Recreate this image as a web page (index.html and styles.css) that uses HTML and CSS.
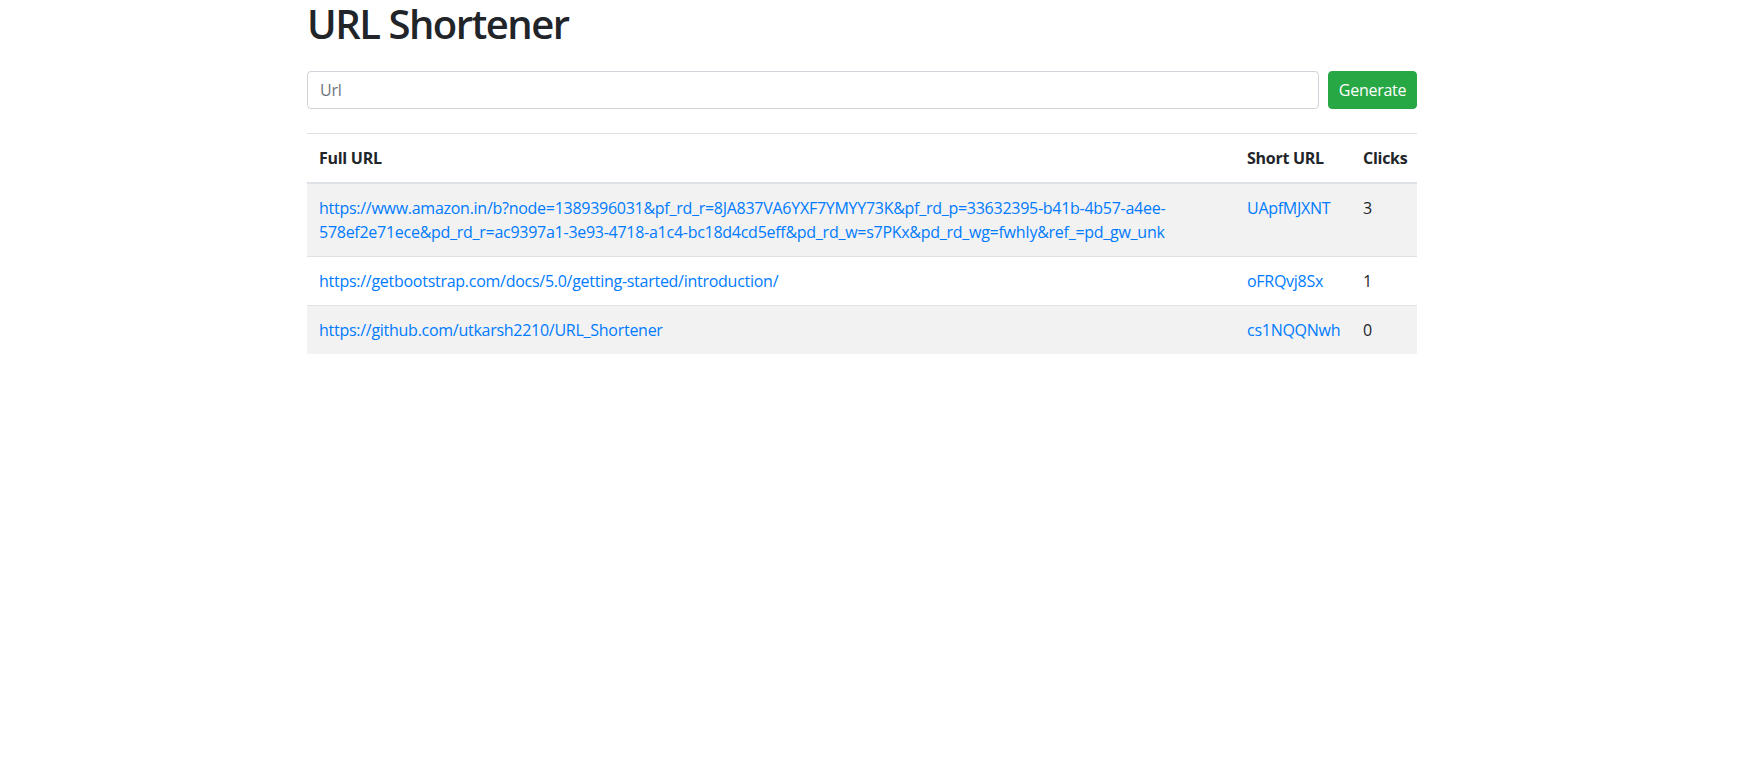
FILE: index.html
```html
<!DOCTYPE html>
<html lang="en">
<head>
<meta charset="utf-8">
<title>URL Shortener</title>
<link rel="stylesheet" href="styles.css">
</head>
<body>
<div class="page">
  <h1 class="title">URL Shortener</h1>
  <form class="shorten-form">
    <input class="url-input" type="text" placeholder="Url">
    <button class="btn-generate" type="button">Generate</button>
  </form>
  <table class="url-table">
    <colgroup>
      <col class="col-full">
      <col class="col-short">
      <col class="col-clicks">
    </colgroup>
    <thead>
      <tr><th>Full URL</th><th>Short URL</th><th>Clicks</th></tr>
    </thead>
    <tbody>
      <tr>
        <td><a href="#">https://www.amazon.in/b?node=1389396031&amp;pf_rd_r=8JA837VA6YXF7YMYY73K&amp;pf_rd_p=33632395-b41b-4b57-a4ee-578ef2e71ece&amp;pd_rd_r=ac9397a1-3e93-4718-a1c4-bc18d4cd5eff&amp;pd_rd_w=s7PKx&amp;pd_rd_wg=fwhIy&amp;ref_=pd_gw_unk</a></td>
        <td><a href="#">UApfMJXNT</a></td>
        <td>3</td>
      </tr>
      <tr>
        <td><a href="#">https://getbootstrap.com/docs/5.0/getting-started/introduction/</a></td>
        <td><a href="#">oFRQvj8Sx</a></td>
        <td>1</td>
      </tr>
      <tr>
        <td><a href="#">https://github.com/utkarsh2210/URL_Shortener</a></td>
        <td><a href="#">cs1NQQNwh</a></td>
        <td>0</td>
      </tr>
    </tbody>
  </table>
</div>
</body>
</html>
```

FILE: styles.css
```css
* { box-sizing: border-box; }

body {
  margin: 0;
  padding-right: 18px;
  font-family: "Open Sans", "Noto Sans", sans-serif;
  font-size: 16px;
  line-height: 1.5;
  letter-spacing: -0.27px;
  color: #212529;
  background: #fff;
}

.page {
  max-width: 1110px;
  margin: 0 auto;
}

.title {
  margin: 0 0 23px;
  font-size: 40px;
  font-weight: 600;
  line-height: 48px;
  letter-spacing: -1.5px;
  color: #212529;
}

.shorten-form {
  display: flex;
  gap: 9px;
  margin: 0 0 24px;
}

.url-input {
  flex: 1;
  height: 38px;
  padding: 6px 12px;
  font: inherit;
  letter-spacing: inherit;
  color: #495057;
  border: 1px solid #ced4da;
  border-radius: 4px;
  background: #fff;
}

.url-input::placeholder { color: #6c757d; }

.btn-generate {
  height: 38px;
  width: 89px;
  padding: 6px 0;
  font: inherit;
  letter-spacing: inherit;
  color: #fff;
  background: #28a745;
  border: 1px solid #28a745;
  border-radius: 4px;
}

.url-table {
  width: 100%;
  table-layout: fixed;
  border-collapse: collapse;
}

.col-full { width: 928px; }
.col-short { width: 116px; }
.col-clicks { width: 66px; }

.url-table th,
.url-table td {
  padding: 12px;
  text-align: left;
  vertical-align: top;
  border-top: 1px solid #dee2e6;
}

.url-table th {
  font-weight: 700;
  border-bottom: 2px solid #dee2e6;
}

.url-table tbody tr:nth-child(odd) { background: #f2f2f2; }

.url-table a {
  color: #007bff;
  text-decoration: none;
}
```
